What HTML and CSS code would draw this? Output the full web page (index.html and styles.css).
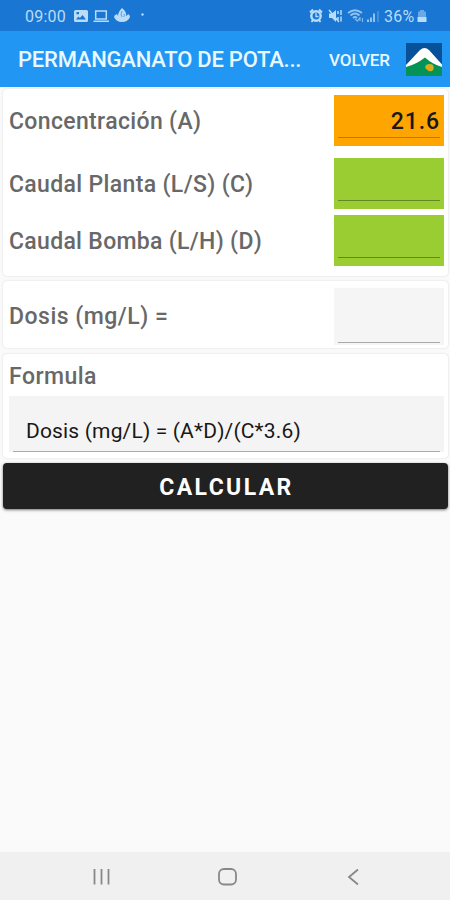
FILE: index.html
```html
<!DOCTYPE html>
<html lang="es">
<head>
<meta charset="utf-8">
<title>Permanganato de potasio</title>
<link rel="stylesheet" href="styles.css">
</head>
<body>
<div class="screen">
  <header class="status">
    <span class="clock">09:00</span>
    <svg class="left-icons" width="74" height="18" viewBox="0 0 74 18">
      <path fill="currentColor" fill-rule="evenodd" d="M2.500 3h11q1.500 0 1.500 1.500v9q0 1.500-1.500 1.500h-11q-1.500 0-1.500-1.500v-9q0-1.500 1.500-1.500zM3 12.500h10l-3.500-4.500-2.600 3-1.500-1.500zM3.500 5v2.200h2.500v-2.200z"/>
      <path fill="none" stroke="currentColor" stroke-width="1.500" d="M22.700 4h10.600v8h-10.600zM20.500 14.300h15.500"/>
      <path fill="currentColor" d="M49 1q5 4 4 8q2-1 2-2 2 1 2 3q-2 5-8 5t-8-5q0-2 3-3l1 2q0-4 4-8z"/>
      <path fill="none" stroke="#1976d2" stroke-width=".6" d="M49 4q-2 4 0 6M51 7q1 2-.5 3"/>
      <circle cx="69.500" cy="7.500" r="1.200" fill="currentColor"/>
    </svg>
    <svg class="right-icons" width="73" height="18" viewBox="0 0 73 18">
      <circle cx="7" cy="9" r="4.700" fill="none" stroke="currentColor" stroke-width="2.400"/>
      <path fill="none" stroke="currentColor" stroke-width="2" d="M1 5.500l3-3M13 5.500l-3-3M2.500 15l2-2.500M11.500 15l-2-2.500"/>
      <path fill="none" stroke="currentColor" stroke-width="1.300" d="M7 6v3.500h2.500"/>
      <path fill="currentColor" d="M20 6.500h3l4-3.500v12l-4-4h-3z"/>
      <path fill="none" stroke="currentColor" stroke-width="1.500" d="M20 3l10 12M29 4v3M32 3v5M29 10v3M32 9.500v5"/>
      <path fill="none" stroke="currentColor" stroke-width="1.800" opacity=".75" d="M39 6q7-5.500 14 0M41.500 8.500q4.500-4 9 0M44 11q2-2 4 0"/>
      <path fill="none" stroke="currentColor" stroke-width="1.200" opacity=".65" d="M46 12l2.500 2 2-3M51 10v4M53.500 11v4"/>
      <path fill="none" stroke="currentColor" stroke-width="1.500" d="M59 12.500v2.500M62 10.500v4.500M65 6.500v8.500"/>
      <path stroke="currentColor" stroke-width="1.500" opacity=".35" d="M69 4v11"/>
    </svg>
    <span class="percent">36%</span>
    <svg class="battery" width="10" height="14" viewBox="0 0 10 14"><path fill="currentColor" opacity=".5" d="M3 1h4v1.500h2v6h-8v-6h2z"/><path fill="currentColor" d="M.5 8h9v5h-9z"/></svg>
  </header>
  <div class="appbar">
    <h1 class="title">PERMANGANATO DE POTA...</h1>
    <span class="back">VOLVER</span>
    <svg class="logo" width="36" height="33" viewBox="0 0 36 33">
      <path fill="#07519b" d="M0 0h36v33h-36z"/>
      <path fill="#049357" d="M0 22l18-9 18 9v11h-36z"/>
      <path fill="#fff" d="M0 22L14 7q4.500-4 9 0l13 14.500v2.500q-10-3-17-9.500-9 7-19 9.500z"/>
      <path fill="#d4ac1d" d="M20 22q4-2 7 0 2 4-1 6-4 1-5-1.500-3-1.500-1-4.500z"/>
    </svg>
  </div>
  <main class="content">
    <section class="card inputs">
      <div class="row"><label class="label l-conc">Concentración (A)</label><div class="field orange">21.6</div></div>
      <div class="row planta"><label class="label l-planta">Caudal Planta (L/S) (C)</label><div class="field green"></div></div>
      <div class="row bomba"><label class="label l-bomba">Caudal Bomba (L/H) (D)</label><div class="field green"></div></div>
    </section>
    <section class="card result"><label class="label l-dosis">Dosis (mg/L) =</label><div class="field gray"></div></section>
    <section class="card formula">
      <div class="label l-formula">Formula</div>
      <div class="field expr"><span class="expr-text">Dosis (mg/L) = (A*D)/(C*3.6)</span></div>
    </section>
    <button class="calc"><span class="calc-text">CALCULAR</span></button>
  </main>
  <nav class="nav">
    <svg width="20" height="20" viewBox="0 0 20 20"><path d="M2.500 3v15.500M9.500 3v15.500M16.500 3v15.500"/></svg>
    <svg width="20" height="20" viewBox="0 0 20 20"><rect x="1" y="3" width="17" height="15.500" rx="5"/></svg>
    <svg width="20" height="20" viewBox="0 0 20 20"><path d="M15 3.500L6 11l9 7.500"/></svg>
  </nav>
</div>
</body>
</html>
```
FILE: styles.css
```css
* { box-sizing: border-box; }
body { margin: 0; font-family: Roboto, sans-serif; background: #fafafa; }
.screen { width: 450px; height: 900px; display: flex; flex-direction: column; overflow: hidden; }
.status { height: 31px; flex: none; background: #1976d2; color: #b9dcf8; display: flex; align-items: center; padding: 1px 23px 0 25px; font-size: 16px; white-space: nowrap; }
.clock { width: 48px; letter-spacing: 0.2px; }
.right-icons { margin-left: auto; }
.percent { width: 31px; margin-left: 2px; margin-right: 1px; letter-spacing: 0.2px; }
.battery { margin-left: 1px; }
.appbar { height: 56px; flex: none; background: #2196f3; color: #e9f8ff; display: flex; align-items: center; padding: 1px 8px 0 18px; white-space: nowrap; }
.title { margin: 0; width: 311px; font-size: 22px; font-weight: 500; letter-spacing: -0.23px; }
.back { width: 77px; font-size: 17px; font-weight: 500; letter-spacing: -0.1px; }
.logo { flex: none; margin-top: 0; }
.content { flex: 1; padding: 2px 2px 0 3px; display: flex; flex-direction: column; }
.card { background: #fff; border-radius: 4px; box-shadow: 0 0 2px rgba(0, 0, 0, 0.16); padding: 0 4px 0 6px; }
.inputs { height: 187px; padding-top: 6px; margin-bottom: 5px; }
.row { height: 51px; display: flex; justify-content: space-between; align-items: center; }
.planta { margin-top: 12px; }
.bomba { margin-top: 6px; }
.label { color: #686868; font-size: 23px; font-weight: 500; line-height: 28px; white-space: nowrap; padding-top: 2px; letter-spacing: 0.35px; }
.l-bomba { letter-spacing: 0.31px; }
.l-dosis { letter-spacing: 0.5px; padding-top: 4px; }
.l-formula { letter-spacing: 0.45px; }
.field { width: 110px; height: 51px; display: flex; flex-direction: column; padding: 0 4px; font-size: 23px; font-weight: 500; color: #181818; text-align: right; line-height: 53px; }
.field::after { content: ""; height: 1px; margin-top: auto; margin-bottom: 8px; flex: none; background: #858585; }
.orange { background: #ffa500; display: grid; grid-template-rows: 42px 1px; letter-spacing: 0.9px; }
.orange::after { margin: 0; background: #b47a1b; }
.green { background: #9acd32; }
.green::after { background: #638626; }
.gray { background: #f5f5f5; height: 57px; margin-top: 3px; }
.gray::after { margin-bottom: 2px; background: #aaa; }
.result { height: 67px; margin-bottom: 6px; display: flex; justify-content: space-between; align-items: center; }
.formula { height: 104px; margin-bottom: 5px; padding-top: 7px; }
.expr { width: 435px; height: 56px; margin-top: 5px; padding-left: 4px; background: #f4f4f4; text-align: left; line-height: 71px; font-weight: 400; font-size: 21px; letter-spacing: 0.16px; }
.expr::after { margin-bottom: 0; margin-top: -16px; background: #aaa; }
.expr-text { padding-left: 13px; }
.calc { width: 445px; height: 46px; border: 0; border-radius: 4px; background: #212121; color: #fff; font: 700 23px/50px Roboto, sans-serif; padding: 0; letter-spacing: 2.4px; box-shadow: 0 1px 3px rgba(0, 0, 0, 0.55); }
.calc-text { display: block; padding-left: 2px; }
.nav { height: 48px; flex: none; background: #f0f0f0; display: flex; justify-content: space-between; padding: 0 87px 0 92px; align-items: center; }
.nav svg { fill: none; stroke: #888; stroke-width: 1.8; }
```
